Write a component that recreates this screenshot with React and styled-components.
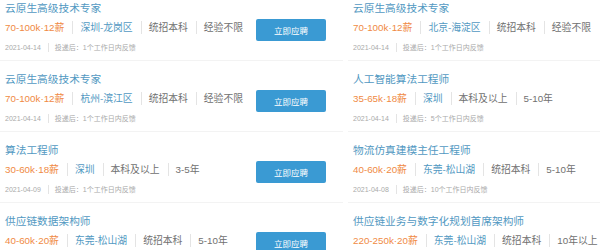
import styled, { createGlobalStyle } from "styled-components";

const jobs = [
  { title: "云原生高级技术专家", salary: "70-100k·12薪", city: "深圳-龙岗区", edu: "统招本科", exp: "经验不限", date: "2021-04-14", reply: "1个工作日内反馈" },
  { title: "云原生高级技术专家", salary: "70-100k·12薪", city: "北京-海淀区", edu: "统招本科", exp: "经验不限", date: "2021-04-14", reply: "1个工作日内反馈" },
  { title: "云原生高级技术专家", salary: "70-100k·12薪", city: "杭州-滨江区", edu: "统招本科", exp: "经验不限", date: "2021-04-14", reply: "1个工作日内反馈" },
  { title: "人工智能算法工程师", salary: "35-65k·18薪", city: "深圳", edu: "本科及以上", exp: "5-10年", date: "2021-04-14", reply: "5个工作日内反馈" },
  { title: "算法工程师", salary: "30-60k·18薪", city: "深圳", edu: "本科及以上", exp: "3-5年", date: "2021-04-09", reply: "1个工作日内反馈" },
  { title: "物流仿真建模主任工程师", salary: "40-60k·20薪", city: "东莞-松山湖", edu: "统招本科", exp: "5-10年", date: "2021-04-08", reply: "10个工作日内反馈" },
  { title: "供应链数据架构师", salary: "40-60k·20薪", city: "东莞-松山湖", edu: "统招本科", exp: "5-10年", date: "2021-04-08", reply: "1个工作日内反馈" },
  { title: "供应链业务与数字化规划首席架构师", salary: "220-250k·20薪", city: "东莞-松山湖", edu: "统招本科", exp: "10年以上", date: "2021-04-08", reply: "1个工作日内反馈" },
];

export default function App() {
  return (
    <>
      <GlobalStyle />
      <List>
        {jobs.map((job, i) => (
          <Item key={i}>
            <Info>
              <Title>{job.title}</Title>
              <Meta>
                <Salary>{job.salary}</Salary>
                <Sep />
                <City>{job.city}</City>
                <Sep />
                <span>{job.edu}</span>
                <Sep />
                <span>{job.exp}</span>
              </Meta>
              <Foot>
                <span>{job.date}</span>
                <SmallSep />
                <span>投递后：{job.reply}</span>
              </Foot>
            </Info>
            <Button>立即应聘</Button>
          </Item>
        ))}
      </List>
    </>
  );
}

const GlobalStyle = createGlobalStyle`
  body {
    margin: 0;
    background: #fff;
    font-family: "Liberation Sans", "Noto Sans CJK SC", sans-serif;
    overflow: hidden;
  }
`

const List = styled.div`
  display: grid;
  grid-template-columns: 343px 343px;
  column-gap: 5px;
  margin-top: -10px;
`

const Item = styled.div`
  display: flex;
  align-items: center;
  justify-content: space-between;
  padding: 10px 17px 7px 5px;
  border-bottom: 1px solid #f3f3f3;
`

const Info = styled.div`
  display: flex;
  flex-direction: column;
  min-width: 0;
`

const Title = styled.div`
  font-size: 10.7px;
  line-height: 16px;
  color: #5299c2;
  margin-bottom: 3px;
  white-space: nowrap;
`

const Meta = styled.div`
  display: flex;
  align-items: center;
  height: 16px;
  font-size: 9.8px;
  color: #707070;
  white-space: nowrap;
  margin-bottom: 6px;
`

const Salary = styled.span`
  color: #f08a44;
`

const City = styled.span`
  color: #5299c2;
`

const Sep = styled.i`
  display: inline-block;
  width: 1px;
  height: 13px;
  background: #e4e4e4;
  margin: 0 7px 0 8px;
`

const Foot = styled.div`
  display: flex;
  align-items: center;
  height: 12px;
  font-size: 7px;
  color: #aaa;
  white-space: nowrap;
`

const SmallSep = styled.i`
  display: inline-block;
  width: 1px;
  height: 9px;
  background: #e4e4e4;
  margin: 0 6px 0 7px;
`

const Button = styled.div`
  flex: none;
  width: 70px;
  height: 22px;
  margin-top: 6px;
  display: flex;
  align-items: center;
  justify-content: center;
  background: #3a9ad3;
  color: #fff;
  font-size: 8.5px;
  border-radius: 2px;
  cursor: pointer;
`
